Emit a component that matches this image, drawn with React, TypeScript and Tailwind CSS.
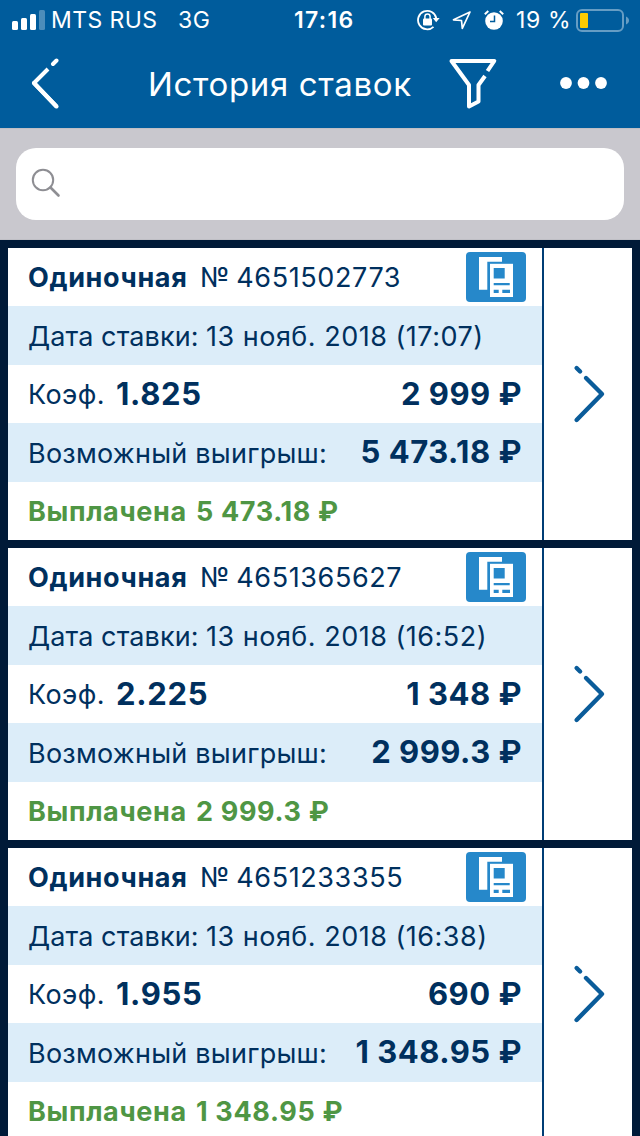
interface Bet {
	id: string;
	date: string;
	odds: string;
	stake: string;
	win: string;
}

const bets: Bet[] = [
	{ id: "4651502773", date: "13 нояб. 2018 (17:07)", odds: "1.825", stake: "2 999 ₽", win: "5 473.18 ₽" },
	{ id: "4651365627", date: "13 нояб. 2018 (16:52)", odds: "2.225", stake: "1 348 ₽", win: "2 999.3 ₽" },
	{ id: "4651233355", date: "13 нояб. 2018 (16:38)", odds: "1.955", stake: "690 ₽", win: "1 348.95 ₽" },
];

function StatusBar() {
	return (
		<div className="flex h-10 items-center whitespace-nowrap text-[23px] leading-[42px] text-white">
			<svg className="ml-3 h-5 w-[34px] shrink-0" viewBox="0 0 34 20" fill="currentColor">
				<rect x="0" y="11" width="6" height="9" rx="1.5" />
				<rect x="9" y="8" width="6" height="12" rx="1.5" />
				<rect x="18" y="4" width="6" height="16" rx="1.5" />
				<rect x="27" y="0" width="6" height="20" rx="1.5" opacity="0.3" />
			</svg>
			<span className="ml-[5px] w-[127px] tracking-[0.4px]">MTS RUS</span>
			<span className="w-[116px] tracking-[0.6px]">3G</span>
			<span className="w-[122px] font-semibold tracking-[1.3px]">17:16</span>
			<svg className="h-[22px] w-6 shrink-0" viewBox="0 0 24 22" fill="none" stroke="currentColor" strokeWidth="1.8">
				<path d="M20.3 9.5A9.2 9.2 0 1 0 17.5 17.8" />
				<path d="M16.8 9h6.8l-3.4 4.3z" fill="currentColor" stroke="none" />
				<rect x="7" y="9.5" width="9" height="7" rx="1" fill="currentColor" stroke="none" />
				<path d="M8.9 10V7.6a2.6 2.6 0 0 1 5.2 0V10" strokeWidth="1.5" />
			</svg>
			<svg className="ml-3 h-5 w-5 shrink-0" viewBox="0 0 20 20" fill="none" stroke="currentColor" strokeWidth="1.7" strokeLinejoin="round">
				<path d="M18 2 1.5 9.8l8 .7.8 7.8z" />
			</svg>
			<svg className="ml-3 h-5 w-5 shrink-0" viewBox="0 0 20 20" fill="none" stroke="currentColor">
				<circle cx="10" cy="11" r="8.8" fill="currentColor" stroke="none" />
				<path d="M.8 4.2 4.3 1M19.2 4.2 15.7 1" strokeWidth="2" />
				<path d="M10.5 5.5v6H6" stroke="#005c9c" strokeWidth="1.5" />
			</svg>
			<span className="ml-3 w-[60px] tracking-[0.6px]">19 %</span>
			<svg className="h-6 w-[54px] shrink-0" viewBox="0 0 54 24">
				<rect x="1" y="2" width="46" height="21" rx="5" fill="none" stroke="#669dc4" strokeWidth="2" />
				<rect x="4" y="5" width="8" height="15" rx="1" fill="#fecb00" />
				<path d="M50 8.5c4 1.5 4 6.5 0 8z" fill="#669dc4" />
			</svg>
		</div>
	);
}

function Header() {
	return (
		<header className="h-32 shrink-0 bg-[#005c9c] text-white">
			<StatusBar />
			<div className="flex h-[86px] items-center">
				<svg className="ml-[30px] h-[52px] w-[30px]" viewBox="0 0 30 52" fill="none" stroke="currentColor" strokeWidth="4" strokeLinecap="round" strokeLinejoin="round">
					<path d="M26.5 49.5 4 26 18 12" strokeLinecap="butt" />
					<path d="M26.5 49.5 4 26M23 7l3.5-3.5" />
				</svg>
				<h1 className="ml-[88px] w-[300px] whitespace-nowrap pt-px text-[33px] leading-[44px] tracking-[0.65px]">История ставок</h1>
				<svg className="h-[52px] w-[50px]" viewBox="0 0 50 52" fill="none" stroke="currentColor" strokeWidth="4" strokeLinejoin="round">
					<path d="M39.5 14l6.8-10H3.5l17.5 24v21.5l9.5-5V28l6.5-9" />
				</svg>
				<svg className="ml-[62px] h-3 w-[48px]" viewBox="0 0 48 12" fill="currentColor">
					<circle cx="6" cy="6" r="5.9" />
					<circle cx="23.5" cy="6" r="5.9" />
					<circle cx="41" cy="6" r="5.9" />
				</svg>
			</div>
		</header>
	);
}

function SearchBar() {
	return (
		<div className="h-28 shrink-0 border-y border-[#bfbfc5] bg-[#c9c8ce] px-4 pt-[19px]">
			<div className="h-[72px] rounded-[20px] bg-white pl-[15px] pt-5">
				<svg className="h-[30px] w-[30px]" viewBox="0 0 30 30" fill="none" stroke="#8e8e93" strokeLinecap="round">
					<circle cx="12" cy="12" r="10.2" strokeWidth="2" />
					<path d="M19.5 19.5l8 8" strokeWidth="2.6" />
				</svg>
			</div>
		</div>
	);
}

function BetCard({ bet }: { bet: Bet }) {
	return (
		<article className="flex h-[292px] shrink-0 whitespace-nowrap bg-white text-[27px] leading-[60px] text-[#00305e]">
			<div className="grid w-[534px] grid-rows-[repeat(5,58.4px)]">
				<div className="flex items-center pl-5 pr-4">
					<span className="w-[172px] pt-px font-bold tracking-[0.65px]">Одиночная</span>
					<span className="pt-px tracking-[0.6px] [word-spacing:-2px]">№ {bet.id}</span>
					<svg className="ml-auto h-[50px] w-[60px]" viewBox="0 0 60 50">
						<rect width="60" height="50" rx="4" fill="#2688ca" />
						<path d="M13 5h23v4.7H21.3v28H13z" fill="#fff" />
						<path d="M24 11.8h23V45H24z" fill="#fff" />
						<path d="M27.7 16h11v10.5h-11zM27.7 31h16v2.3h-16zM27.7 37.7h5V41h-5zM36.3 37.7H44V41h-7.7z" fill="#2688ca" />
					</svg>
				</div>
				<div className="flex bg-[#dcedf9] pl-5 leading-[61px]">
					<span className="w-[178px] tracking-[0.1px]">Дата ставки:</span>
					<span className="tracking-[0.5px]">{bet.date}</span>
				</div>
				<div className="flex pl-5 pr-5">
					<span className="w-[88px] tracking-[0.4px]">Коэф.</span>
					<b className="text-[31px] leading-[58px] tracking-[0.7px]">{bet.odds}</b>
					<b className="ml-auto text-[31px] leading-[58px] tracking-[0.5px]">{bet.stake}</b>
				</div>
				<div className="flex bg-[#dcedf9] pl-5 pr-5 leading-[61px]">
					<span className="tracking-[0.25px]">Возможный выигрыш:</span>
					<b className="ml-auto text-[31px] leading-[58px] tracking-[0.5px]">{bet.win}</b>
				</div>
				<div className="flex pl-5 font-bold text-[#4f9644]">
					<span className="w-[168px] tracking-[0.65px]">Выплачена</span>
					<span className="tracking-[0.65px]">{bet.win}</span>
				</div>
			</div>
			<div className="flex flex-1 items-center border-l-2 border-[#003d75] pl-[29px]">
				<svg className="h-[60px] w-[34px]" viewBox="0 0 34 60" fill="none" stroke="#0a5c9a" strokeWidth="4.4" strokeLinecap="round" strokeLinejoin="round">
					<path d="M3.6 4l3.5 3.5" />
					<path d="M3.6 56 29 30 13 14" />
				</svg>
			</div>
		</article>
	);
}

export default function App() {
	return (
		<div className="flex h-[1136px] w-[640px] flex-col overflow-hidden bg-[#001a38] font-['Inter','Noto_Sans',sans-serif]">
			<Header />
			<SearchBar />
			<main className="flex flex-col gap-2 p-2">
				{bets.map((bet) => (
					<BetCard key={bet.id} bet={bet} />
				))}
			</main>
		</div>
	);
}
